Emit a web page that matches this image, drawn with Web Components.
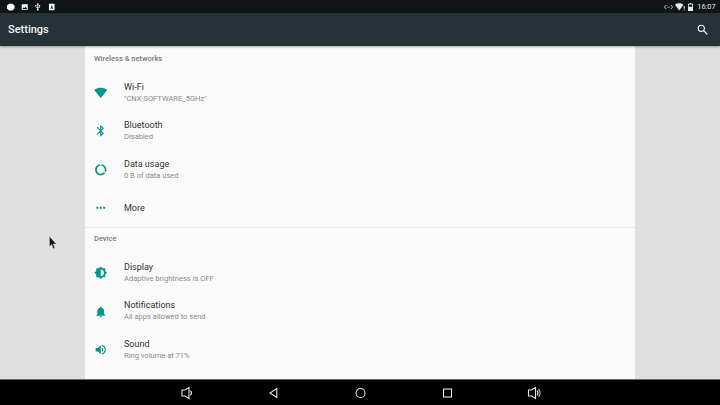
<!DOCTYPE html>
<html>
<head>
<meta charset="utf-8">
<title>Settings</title>
<style>
    html, body { margin: 0; height: 405px; overflow: hidden; background: #e0e0e0; font-family: Roboto, sans-serif; }
    body { display: flex; flex-direction: column; position: relative; }
    settings-list { flex: 1; min-height: 0; }
</style>
</head>
<body>
<status-bar></status-bar>
<app-bar>Settings</app-bar>
<settings-list>
    <settings-section label="Wireless &amp; networks">
        <settings-row icon="wifi" title="Wi-Fi" summary="&quot;CNX-SOFTWARE_5GHz&quot;"></settings-row>
        <settings-row icon="bluetooth" title="Bluetooth" summary="Disabled"></settings-row>
        <settings-row icon="data" title="Data usage" summary="0 B of data used"></settings-row>
        <settings-row icon="more" title="More"></settings-row>
    </settings-section>
    <settings-section label="Device" divided>
        <settings-row icon="display" title="Display" summary="Adaptive brightness is OFF"></settings-row>
        <settings-row icon="bell" title="Notifications" summary="All apps allowed to send"></settings-row>
        <settings-row icon="sound" title="Sound" summary="Ring volume at 71%"></settings-row>
    </settings-section>
</settings-list>
<nav-bar></nav-bar>
<mouse-cursor></mouse-cursor>

<script>
const ICONS = {
    wifi: "M12.01 21.49L23.64 7c-.45-.34-4.93-4-11.64-4C5.28 3 .81 6.66.36 7l11.63 14.49.01.01.01-.01z",
    bluetooth: "M17.71 7.71L12 2h-1v7.59L6.41 5 5 6.41 10.59 12 5 17.59 6.41 19 11 14.41V22h1l5.71-5.71-4.3-4.29 4.3-4.29zM13 5.83l1.88 1.88L13 9.59V5.83zm1.88 10.46L13 18.17v-3.76l1.88 1.88z",
    data: "M13 2.05v3.03c3.39.49 6 3.39 6 6.92 0 .9-.18 1.75-.48 2.54l2.6 1.53c.56-1.24.88-2.62.88-4.07 0-5.18-3.95-9.45-9-9.95zM12 19c-3.87 0-7-3.13-7-7 0-3.53 2.61-6.43 6-6.92V2.05c-5.06.5-9 4.76-9 9.95 0 5.52 4.47 10 9.99 10 3.31 0 6.24-1.61 8.06-4.09l-2.6-1.53C16.17 17.98 14.21 19 12 19z",
    more: "M6 10c-1.1 0-2 .9-2 2s.9 2 2 2 2-.9 2-2-.9-2-2-2zm12 0c-1.1 0-2 .9-2 2s.9 2 2 2 2-.9 2-2-.9-2-2-2zm-6 0c-1.1 0-2 .9-2 2s.9 2 2 2 2-.9 2-2-.9-2-2-2z",
    display: "M20 15.31L23.31 12 20 8.69V4h-4.69L12 .69 8.69 4H4v4.69L.69 12 4 15.31V20h4.69L12 23.31 15.31 20H20v-4.69zM12 18V6c3.31 0 6 2.69 6 6s-2.69 6-6 6z",
    bell: "M12 22c1.1 0 2-.9 2-2h-4c0 1.1.89 2 2 2zm6-6v-5c0-3.07-1.64-5.64-4.5-6.32V4c0-.83-.67-1.5-1.5-1.5s-1.5.67-1.5 1.5v.68C7.63 5.36 6 7.92 6 11v5l-2 2v1h16v-1l-2-2z",
    sound: "M3 9v6h4l5 5V4L7 9H3zm13.5 3c0-1.77-1.02-3.29-2.5-4.03v8.05c1.48-.73 2.5-2.25 2.5-4.02zM14 3.23v2.06c2.89.86 5 3.54 5 6.71s-2.11 5.85-5 6.71v2.06c4.01-.91 7-4.49 7-8.77s-2.99-7.86-7-8.77z"
};

class StatusBar extends HTMLElement {
    constructor() {
        super();
        this.attachShadow({ mode: "open" });
        this.shadowRoot.innerHTML = `
            <style>
                :host { display: flex; align-items: center; height: 13px; flex: none; background: #0f1517; color: #fff; padding: 0 4.500px 0 7px; box-sizing: border-box; font: 400 7.300px Roboto, sans-serif; }
                .left, .right { display: flex; align-items: center; }
                .left { gap: 6px; }
                .right { margin-left: auto; color: #e8e8e8; }
                svg { display: block; width: 7.500px; height: 8px; fill: currentColor; }
                .clock { margin-left: 4px; opacity: .999; }
            </style>
            <div class="left">
                <svg viewBox="0 0 8 8"><path d="M2.300.400h3.400L8 2.300v3.400L5.700 7.600H2.300L0 5.700V2.300z"/></svg>
                <svg viewBox="0 0 8 8"><path fill-rule="evenodd" d="M.800 1h6.400v6H.800zM1.500 6h5L5 3.500 3.800 5.200 3 4.200z"/></svg>
                <svg viewBox="0 0 8 8"><path d="M3.600 0h.8l.800 1.200h-.600v3.600l1-.800V3h-.300V1.900h1.300V3H6.300v1.300L4.400 5.700v.500a.900.900 0 1 1-.800 0v-1L1.700 3.900V3a.700.700 0 1 1 .600 0v.600l1.300 1V1.200H3z"/></svg>
                <svg viewBox="0 0 8 8"><path fill-rule="evenodd" d="M1 .500h6v7H1zM4 1.800L2.600 6h.800l.200-.700h1l.200.700h.800zM3.800 4.600L4.100 3.500l.300 1.100z"/></svg>
            </div>
            <div class="right">
                <svg style="width:9px;margin-right:1.500px" viewBox="0 0 9 8"><path d="M2.200 2L.4 4l1.800 2M6.800 2l1.800 2-1.800 2" fill="none" stroke="currentColor" stroke-width=".8"/><path d="M3 3.700h.7v.7H3zM4.200 3.700h.7v.7h-.7zM5.300 3.700H6v.7h-.7z"/></svg>
                <svg style="width:10px;margin-right:3.500px" viewBox="0 0 10 8"><path d="M0 1.700C1.300.800 2.800.300 4.200.300s2.900.500 4.200 1.400L4.200 7.500z"/><path d="M8.700 3h1v2.800h-1zM8.700 6.400h1v1h-1z"/></svg>
                <svg style="width:5px" viewBox="0 0 5 8"><path fill-rule="evenodd" d="M1.600 0h1.800v.700H5V8H0V.700h1.600zM.800 1.500v2.300h3.400V1.500z"/></svg>
                <span class="clock">16:07</span>
            </div>
        `;
    }
}

class AppBar extends HTMLElement {
    constructor() {
        super();
        this.attachShadow({ mode: "open" });
        this.shadowRoot.innerHTML = `
            <style>
                :host { display: flex; align-items: center; flex: none; height: 33px; background: #263238; color: #f4f5f5; padding: 0 12px 0 8px; box-sizing: border-box; font: 500 11px Roboto, sans-serif; position: relative; z-index: 1; box-shadow: 0 1px 2px rgba(0,0,0,.35); }
                span { opacity: .999; }
                svg { margin-left: auto; width: 11px; height: 11px; display: block; }
            </style>
            <span><slot></slot></span>
            <svg viewBox="0 0 11 11"><circle cx="4.300" cy="4.300" r="3.100" fill="none" stroke="#fff" stroke-width="1.100"/><path d="M6.600 6.600l3.600 3.600" stroke="#fff" stroke-width="1.300"/></svg>
        `;
    }
}

class SettingsList extends HTMLElement {
    constructor() {
        super();
        this.attachShadow({ mode: "open" });
        this.shadowRoot.innerHTML = `
            <style>
                :host { display: flex; justify-content: center; overflow: hidden; }
                .card { width: 550px; background: #fafafa; padding-top: 2.200px; }
            </style>
            <div class="card"><slot></slot></div>
        `;
    }
}

class SettingsSection extends HTMLElement {
    constructor() {
        super();
        this.attachShadow({ mode: "open" });
        const label = this.getAttribute("label");
        this.shadowRoot.innerHTML = `
            <style>
                :host { display: block; }
                :host([divided]) { border-top: 1px solid #e6e6e6; }
                .label { height: 21px; margin-bottom: 4.250px; padding-left: 9px; display: flex; align-items: center; font: 500 7.500px Roboto, sans-serif; color: #7b7b7b; opacity: .999; }
            </style>
            <div class="label"></div>
            <slot></slot>
        `;
        this.shadowRoot.querySelector(".label").textContent = label;
    }
}

class SettingsRow extends HTMLElement {
    constructor() {
        super();
        this.attachShadow({ mode: "open" });
        const summary = this.getAttribute("summary");
        this.shadowRoot.innerHTML = `
            <style>
                :host { display: flex; align-items: center; height: 38.500px; }
                svg { width: 13.500px; height: 13.500px; fill: #009688; margin-left: 8.750px; flex: none; }
                .text { margin-left: 16.750px; display: flex; flex-direction: column; opacity: .999; }
                .title { font: 400 9px/11px Roboto, sans-serif; color: #333; }
                .summary { font: 400 7.550px/11px Roboto, sans-serif; color: #8a8a8a; }
            </style>
            <svg viewBox="0 0 24 24"><path d="${ICONS[this.getAttribute("icon")]}"/></svg>
            <div class="text">
                <span class="title"></span>
                ${summary ? `<span class="summary"></span>` : ""}
            </div>
        `;
        this.shadowRoot.querySelector(".title").textContent = this.getAttribute("title");
        if (summary) this.shadowRoot.querySelector(".summary").textContent = summary;
    }
}

class NavBar extends HTMLElement {
    constructor() {
        super();
        this.attachShadow({ mode: "open" });
        this.shadowRoot.innerHTML = `
            <style>
                :host { display: flex; flex: none; height: 26px; background: #000; justify-content: center; align-items: center; gap: 68px; border-top: 1px solid #666; box-sizing: border-box; }
                svg { display: block; width: 19px; height: 14px; fill: none; stroke: #e4e4e4; stroke-width: 1.100; }
            </style>
            <svg viewBox="0 0 19 14"><path d="M5 4h3l4-2.500v11L8 10H5z"/><path d="M13.500 4.700a3.500 3.500 0 0 1 0 4.600"/></svg>
            <svg viewBox="0 0 19 14"><path d="M12.800 2.500v9L6 7z"/></svg>
            <svg viewBox="0 0 19 14"><circle cx="9.500" cy="7" r="4.500"/></svg>
            <svg viewBox="0 0 19 14"><rect x="5.500" y="3" width="8" height="8"/></svg>
            <svg viewBox="0 0 19 14"><path d="M3.500 4h3l4-2.500v11L6.500 10h-3z"/><path d="M12 4.700a3.500 3.500 0 0 1 0 4.600M13.600 3.300a5.500 5.500 0 0 1 0 7.400"/></svg>
        `;
    }
}

class MouseCursor extends HTMLElement {
    constructor() {
        super();
        this.attachShadow({ mode: "open" });
        this.shadowRoot.innerHTML = `
            <style>
                :host { position: absolute; left: 49px; top: 236px; width: 9px; height: 14px; }
                svg { display: block; width: 9px; height: 14px; }
            </style>
            <svg viewBox="0 0 9 14"><path d="M.500.500v10l2.200-2 1.600 4 1.500-.600-1.600-3.900h3z" fill="#111" stroke="#bbb" stroke-width=".5"/></svg>
        `;
    }
}

customElements.define("status-bar", StatusBar);
customElements.define("app-bar", AppBar);
customElements.define("settings-list", SettingsList);
customElements.define("settings-section", SettingsSection);
customElements.define("settings-row", SettingsRow);
customElements.define("nav-bar", NavBar);
customElements.define("mouse-cursor", MouseCursor);
</script>
</body>
</html>
